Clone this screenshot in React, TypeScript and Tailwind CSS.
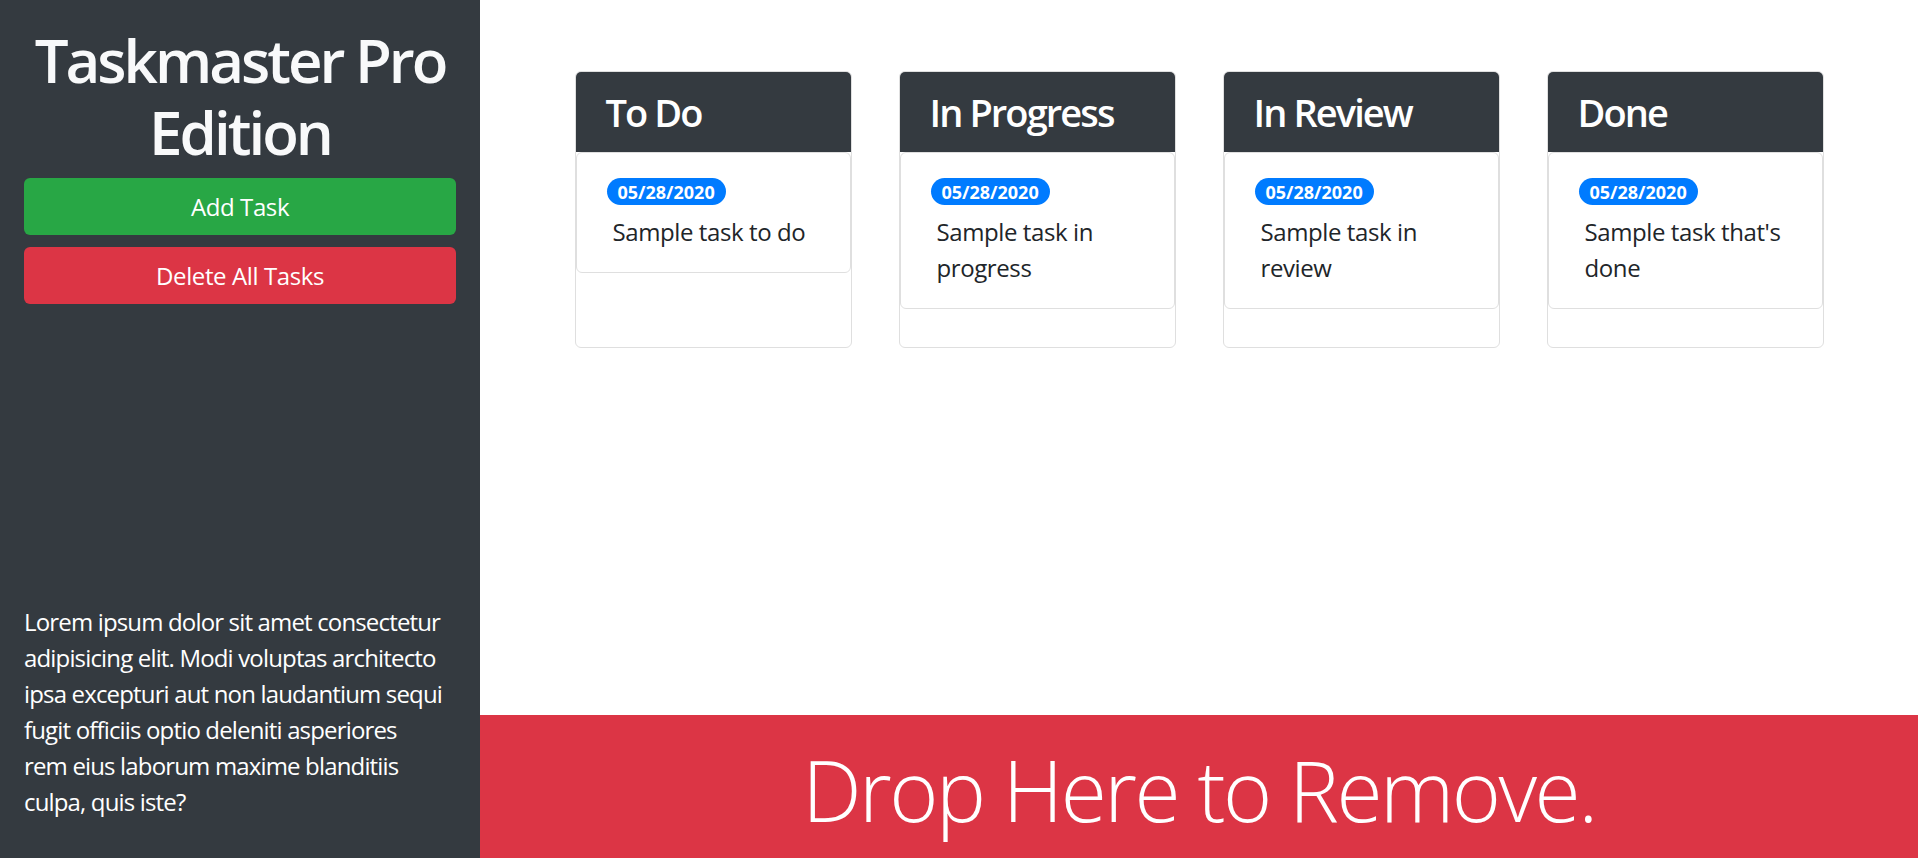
import React from "react";

interface Task {
  date: string;
  text: string;
}

interface Column {
  title: string;
  tasks: Task[];
}

const columns: Column[] = [
  { title: "To Do", tasks: [{ date: "05/28/2020", text: "Sample task to do" }] },
  { title: "In Progress", tasks: [{ date: "05/28/2020", text: "Sample task in progress" }] },
  { title: "In Review", tasks: [{ date: "05/28/2020", text: "Sample task in review" }] },
  { title: "Done", tasks: [{ date: "05/28/2020", text: "Sample task that's done" }] },
];

const loremLines = [
  "Lorem ipsum dolor sit amet consectetur",
  "adipisicing elit. Modi voluptas architecto",
  "ipsa excepturi aut non laudantium sequi",
  "fugit officiis optio deleniti asperiores",
  "rem eius laborum maxime blanditiis",
  "culpa, quis iste?",
];

const TaskCard = ({ task }: { task: Task }) => (
  <div className="border border-[#dfdfdf] rounded-[6px] bg-white px-[30px] pt-[25px] pb-[22px]">
    <span className="inline-flex items-center h-[27px] px-[11px] rounded-full bg-[#007bff] text-white text-[18px] font-bold leading-none tracking-normal">
      {task.date}
    </span>
    <p className="mt-[9px] pl-[6px] text-[24px] leading-[36px] text-[#212529]">{task.text}</p>
  </div>
);

const TaskColumn = ({ column }: { column: Column }) => (
  <div className="px-[23px] flex justify-center">
    <div className="w-[277px] h-[277px] border border-[#dfdfdf] rounded-[6px] overflow-hidden bg-white flex flex-col">
      <div className="h-[80px] shrink-0 bg-[#343a40] px-[30px] flex items-center">
        <h3 className="text-[38px] font-semibold leading-[1.2] text-white whitespace-nowrap tracking-[-0.05em] translate-y-[1px]">
          {column.title}
        </h3>
      </div>
      {column.tasks.map((task, i) => (
        <TaskCard key={i} task={task} />
      ))}
    </div>
  </div>
);

export default function App() {
  return (
    <div className="flex h-[858px] w-full overflow-hidden font-['Open_Sans',sans-serif] tracking-[-0.025em]">
      <aside className="w-[480px] shrink-0 bg-[#343a40] px-6 pt-[24px] pb-[38px] flex flex-col">
        <h1 className="text-[60px] font-semibold leading-[72px] text-center text-[#f8f9fa] mb-[10px] tracking-[-0.05em]">
          Taskmaster Pro Edition
        </h1>
        <button className="h-[57px] w-full rounded-[6px] bg-[#28a745] text-white text-[24px] mb-3">
          Add Task
        </button>
        <button className="h-[57px] w-full rounded-[6px] bg-[#dc3545] text-white text-[24px]">
          Delete All Tasks
        </button>
        <p className="mt-auto text-[24px] leading-[36px] text-white whitespace-nowrap tracking-[-0.035em]">
          {loremLines.map((line, i) => (
            <span key={i} className="block">
              {line}
            </span>
          ))}
        </p>
      </aside>
      <main className="flex-1 flex flex-col">
        <div className="flex-1 pt-[71px]">
          <div className="w-[1296px] mx-auto grid grid-cols-4">
            {columns.map((col) => (
              <TaskColumn key={col.title} column={col} />
            ))}
          </div>
        </div>
        <div className="h-[143px] shrink-0 bg-[#dc3545] flex items-center justify-center">
          <h1 className="text-[84px] font-light leading-[1.2] text-white tracking-[-0.03em] translate-y-[4px]">
            Drop Here to Remove.
          </h1>
        </div>
      </main>
    </div>
  );
}
